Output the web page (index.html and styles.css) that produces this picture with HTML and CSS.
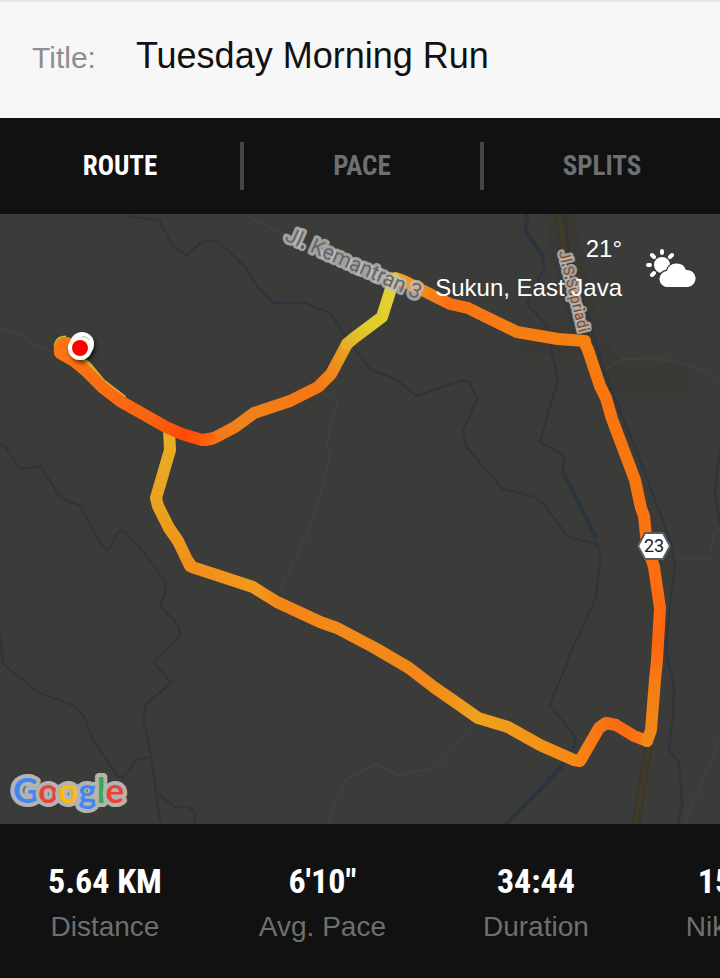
FILE: index.html
```html
<!DOCTYPE html>
<html lang="en">
<head>
<meta charset="utf-8">
<meta name="viewport" content="width=device-width, initial-scale=1">
<title>Tuesday Morning Run</title>
<link rel="stylesheet" href="styles.css">
</head>
<body>
<main class="run">
  <header class="title-bar">
    <label class="title-label" for="run-title">Title:</label>
    <input class="title-input" id="run-title" type="text" value="Tuesday Morning Run">
  </header>

  <nav class="tabs" aria-label="Run views">
    <button class="tab tab-active" type="button">ROUTE</button>
    <button class="tab" type="button">PACE</button>
    <button class="tab" type="button">SPLITS</button>
  </nav>

  <section class="map" aria-label="Route map">
    <svg class="map-canvas" viewBox="0 214 720 610" preserveAspectRatio="xMidYMid slice">
      <defs>
        <linearGradient id="g-loop" gradientUnits="userSpaceOnUse" x1="60" y1="350" x2="225" y2="436">
          <stop offset="0" stop-color="#fb7414"/><stop offset=".6" stop-color="#fa6410"/><stop offset=".8" stop-color="#fe4a05"/><stop offset=".9" stop-color="#fd5a0a"/><stop offset="1" stop-color="#f08019"/>
        </linearGradient>
        <linearGradient id="g-north" gradientUnits="userSpaceOnUse" x1="211" y1="439" x2="347" y2="344">
          <stop offset="0" stop-color="#f5721a"/><stop offset=".2" stop-color="#f0831a"/><stop offset=".68" stop-color="#f67512"/><stop offset=".85" stop-color="#ef8a1d"/><stop offset="1" stop-color="#e5a824"/>
        </linearGradient>
        <linearGradient id="g-yellow" gradientUnits="userSpaceOnUse" x1="347" y1="344" x2="394" y2="280">
          <stop offset="0" stop-color="#e3b028"/><stop offset=".3" stop-color="#e0cc2b"/><stop offset="1" stop-color="#e2d334"/>
        </linearGradient>
        <linearGradient id="g-east" gradientUnits="userSpaceOnUse" x1="396" y1="278" x2="585" y2="341">
          <stop offset="0" stop-color="#f2a224"/><stop offset=".3" stop-color="#fa6f12"/><stop offset=".6" stop-color="#f57d14"/><stop offset="1" stop-color="#f4800f"/>
        </linearGradient>
        <linearGradient id="g-road" gradientUnits="userSpaceOnUse" x1="0" y1="341" x2="0" y2="745">
          <stop offset="0" stop-color="#f3810f"/><stop offset=".15" stop-color="#fb7310"/><stop offset=".3" stop-color="#f6780f"/><stop offset=".5" stop-color="#fb7210"/><stop offset=".75" stop-color="#fc6610"/><stop offset=".83" stop-color="#f67a12"/><stop offset="1" stop-color="#f18a16"/>
        </linearGradient>
        <linearGradient id="g-south" gradientUnits="userSpaceOnUse" x1="651" y1="0" x2="192" y2="0">
          <stop offset="0" stop-color="#f38316"/><stop offset=".06" stop-color="#fa6c12"/><stop offset=".1" stop-color="#f97114"/><stop offset=".17" stop-color="#f68914"/><stop offset=".38" stop-color="#eea21d"/><stop offset=".5" stop-color="#f28618"/><stop offset=".7" stop-color="#f28a18"/><stop offset=".8" stop-color="#f58413"/><stop offset=".86" stop-color="#f09a1c"/><stop offset="1" stop-color="#f28e1a"/>
        </linearGradient>
        <linearGradient id="g-west" gradientUnits="userSpaceOnUse" x1="0" y1="430" x2="0" y2="567">
          <stop offset="0" stop-color="#e5ae25"/><stop offset=".4" stop-color="#e9a622"/><stop offset="1" stop-color="#f19219"/>
        </linearGradient>
        <filter id="drop" x="-30%" y="-30%" width="170%" height="170%"><feDropShadow dx="2" dy="3" stdDeviation="2" flood-opacity=".6"/></filter>
      </defs>

      <rect class="ground" x="0" y="214" width="720" height="610"/>
      <path class="urban" d="M560 204 564 245 588 340 612 376 690 376M588 340 520 340"/>

      <g class="lane">
        <path d="M240 212 290 238"/>
        <path d="M0 327 22 335 35 345 52 352"/>
        <path d="M322 394 338 399 326 446 331 452 321 492 311 524 295 560 279 592"/>
        <path d="M605 370 621 359 670 360 695 367 720 378"/>
        <path d="M672 558 710 559 713 534 720 528"/>
        <path d="M328 824 345 780 376 764 398 775 435 768 452 750 472 724"/>
        <path d="M684 824 720 740"/>
      </g>

      <g class="road">
        <path d="M559 214 564 245 585 341"/>
        <path d="M649 744 636 824"/>
      </g>
      <path class="road-core" d="M559 214 566 260 M649 744 636 824"/>

      <g class="river">
        <path d="M127 216 159 220 173 247 187 255 204 240 219 242 240 262 248 271 258 288 274 303 305 303 330 313 343 333 371 370 396 379 416 396 463 380 469 382 477 399 463 430 466 446 480 463 503 489 534 497 545 505 567 536 598 545"/>
        <path d="M0 443 5 446 20 469 40 466 61 498 80 506 103 547 109 549 118 532 125 532 140 547 164 580 166 590 160 606 178 625 180 636 153 662 171 683 146 704 143 718 152 760 159 816 163 826"/>
        <path d="M0 636 3 664 39 693 75 706 84 716 92 738 118 777 124 777 137 759 152 757"/>
        <path d="M158 794 175 807 188 807 195 813 195 826"/>
        <path d="M565 214 569 250 604 371 644 470 671 543 675 563 668 625 666 652 674 685 673 717 669 750 679 762 682 806 677 826"/>
        <path d="M720 447 715 490 720 525"/>
      </g>
      <path class="river river-wide" d="M527 214 525 225 528 237 540 252 545 267 537 283 527 304 546 324 551 350 558 379 540 442 564 455 563 474 598 545 601 558 595 600 572 650 550 705 576 738 572 754 545 783 504 826"/>
      <path class="river river-heavy" d="M527 214 526 232 544 258M564 474 596 537M563 766 504 826"/>

      <path class="slow-edge" d="M76 358 87 364 102 382 124 399"/>
      <path class="slow-rim" d="M57 347Q58 339 66 339"/>
      <g class="route">
        <path stroke="url(#g-west)" d="M169 430 170 450 163 474 156 498 158 506 169 528 178 541 190 566"/>
        <path stroke="url(#g-south)" d="M647 741 634 736 616 725 606 723 599 728 580 761 574 760 540 745 508 727 478 718 451 699 435 688 409 668 375 648 337 628 320 622 290 608 277 602 264 594 253 587 192 567 188 561"/>
        <path stroke="url(#g-road)" d="M584 341 588 350 600 386 606 398 612 419 635 480 641 508 644 516 647 545 654 567 660 608 657 660 655 680 651 730 647 741"/>
        <path stroke="url(#g-east)" d="M395 278 404 281 422 290 450 304 468 308 480 314 517 332 558 339 585 341"/>
        <path stroke="url(#g-north)" d="M204 440 214 438 235 427 254 413 290 401 318 387 331 374 347 344"/>
        <path stroke="url(#g-yellow)" d="M347 344 354 338 382 317 394 279"/>
        <path stroke="url(#g-loop)" d="M72 346Q66 341 62 344Q59 347 60 353L74 361 86 371 102 387 120 401 166 427 182 434 202 440 211 439"/>
      </g>

      <g filter="url(#drop)">
        <circle class="pin" cx="82" cy="344" r="12"/>
        <circle class="pin" cx="80" cy="348" r="12"/>
      </g>
      <path class="pin-mark" d="M82 337Q87 336 89 340"/>
      <circle class="pin-core" cx="80" cy="348" r="8"/>

      <text class="street" transform="translate(284 240) rotate(24)">Jl. Kemantran 3</text>
      <text class="street street-main" transform="translate(559 252) rotate(76)">Jl.S.Supriadi</text>

      <path class="shield" d="M645 533H663L670 546 663 559H645L638 546Z"/>
      <text class="shield-text" x="654" y="552">23</text>

      <text class="brand" x="13" y="803"><tspan fill="#4285f4">G</tspan><tspan fill="#ea4335">o</tspan><tspan fill="#fbbc05">o</tspan><tspan fill="#4285f4">g</tspan><tspan fill="#34a853">l</tspan><tspan fill="#ea4335">e</tspan></text>
    </svg>

    <div class="weather">
      <div class="weather-text">
        <span>21°</span>
        <span>Sukun, East Java</span>
      </div>
      <svg class="weather-icon" viewBox="0 0 50 38" role="img" aria-label="Partly cloudy">
        <g stroke="#fff" stroke-width="4" stroke-linecap="round">
          <path d="M16 2V4M2 16H4M6 6 8 8M26 6 24 8M6 26 8 24"/>
        </g>
        <circle cx="16" cy="16" r="8" fill="#fff"/>
        <path d="M22 38a8 8 0 0 1-1-16A10 10 0 0 1 40 21a8.500 8.500 0 0 1 2 17Z" fill="#fff" stroke="#3b3b3b" stroke-width="3" paint-order="stroke"/>
      </svg>
    </div>
  </section>

  <dl class="stats">
    <div class="stat"><dt>Distance</dt><dd>5.64 KM</dd></div>
    <div class="stat"><dt>Avg. Pace</dt><dd>6'10"</dd></div>
    <div class="stat"><dt>Duration</dt><dd>34:44</dd></div>
    <div class="stat stat-next"><dt>Nik</dt><dd>15</dd></div>
  </dl>
</main>
</body>
</html>
```
FILE: styles.css
```css
* {
  box-sizing: border-box;
}

body {
  margin: 0;
  background: #111;
  font-family: "Liberation Sans", Arial, sans-serif;
}

.run {
  display: flex;
  flex-direction: column;
  min-height: 100vh;
}

/* Title */
.title-bar {
  display: flex;
  align-items: baseline;
  gap: 40px;
  padding: 32px 32px 40px;
  border-top: 2px solid #e4e4e4;
  background: #f7f7f7;
}

.title-label {
  color: #8e8e8e;
  font-size: 30px;
}

.title-input {
  flex: 1;
  min-width: 0;
  padding: 0;
  border: 0;
  background: none;
  color: #111;
  font-family: inherit;
  font-size: 36px;
  line-height: 44px;
}

/* Tabs */
.tabs {
  display: grid;
  grid-template-columns: repeat(3, 1fr);
  padding: 24px 0;
  background: #111;
}

.tab {
  height: 48px;
  padding: 0;
  border: 0;
  background: none;
  color: #6f6f6f;
  font-family: "Roboto Condensed", "Liberation Sans Narrow", sans-serif;
  font-size: 27px;
  font-weight: 700;
}

.tab + .tab {
  border-left: 4px solid #464646;
}

.tab-active {
  color: #fff;
}

/* Map */
.map {
  position: relative;
  flex: 1;
  min-height: 480px;
  overflow: hidden;
  background: #3b3b3b;
}

.map-canvas {
  position: absolute;
  inset: 0;
  width: 100%;
  height: 100%;
}

.ground {
  fill: #3b3b3a;
}

.urban {
  fill: none;
  stroke: #3a3935;
  stroke-width: 30;
  stroke-linejoin: round;
}

.lane,
.river,
.road,
.road-core,
.route,
.slow-edge,
.slow-rim {
  fill: none;
  stroke-linejoin: round;
}

.lane {
  stroke: #404040;
  stroke-width: 2;
}

.road {
  stroke: #37342b;
  stroke-width: 8;
}

.road-core {
  stroke: #3f3b28;
  stroke-width: 6;
}

.river {
  stroke: #2c353d;
  stroke-width: 2;
}

.river-heavy {
  stroke-width: 4;
}

.route {
  stroke-width: 12;
  stroke-linecap: round;
}

.slow-edge {
  stroke: #dfae2b;
  stroke-width: 7;
}

.slow-rim {
  stroke: #b9c72e;
  stroke-width: 7;
}

.pin {
  fill: #fff;
}

.pin-mark {
  fill: none;
  stroke: #8fd17a;
  stroke-width: 1;
}

.pin-core {
  fill: #f00;
}

.street {
  fill: #666;
  stroke: rgba(190, 190, 190, 0.8);
  stroke-width: 6;
  stroke-linejoin: round;
  paint-order: stroke;
  font-family: Roboto, sans-serif;
  font-size: 21px;
}

.street-main {
  fill: #8a4b1e;
  stroke-width: 5;
  font-size: 15px;
}

.shield {
  fill: #fff;
  stroke: #5c5c5c;
  stroke-width: 2;
}

.shield-text {
  fill: #222;
  font-family: Roboto, sans-serif;
  font-size: 18px;
  text-anchor: middle;
}

.brand {
  stroke: #b3b3b1;
  stroke-width: 8;
  stroke-linejoin: round;
  paint-order: stroke;
  font-family: Lato, sans-serif;
  font-size: 35px;
  font-weight: 700;
}

.weather {
  position: absolute;
  top: 15px;
  right: 24px;
  display: flex;
  align-items: center;
  gap: 24px;
  color: #fff;
}

.weather-text {
  display: flex;
  flex-direction: column;
  align-items: flex-end;
  font-size: 24px;
  line-height: 39px;
}

.weather-icon {
  width: 50px;
  height: 38px;
}

/* Stats: one row that runs on past the right edge */
.stats {
  display: flex;
  gap: 97px;
  margin: 0;
  padding: 33px 0 31px 48px;
  overflow: hidden;
  background: #111;
}

.stat {
  display: flex;
  flex: none;
  flex-direction: column-reverse;
  justify-content: flex-end;
  gap: 2px;
  text-align: center;
}

.stat dt {
  color: #6f6f6f;
  font-size: 28px;
  line-height: 40px;
}

.stat dd {
  margin: 0;
  color: #fff;
  font-family: "Roboto Condensed", "Liberation Sans Narrow", sans-serif;
  font-size: 34px;
  font-weight: 700;
  line-height: 48px;
}

.stat-next {
  text-align: left;
}

.stat-next dd {
  padding-left: 12px;
}
```
